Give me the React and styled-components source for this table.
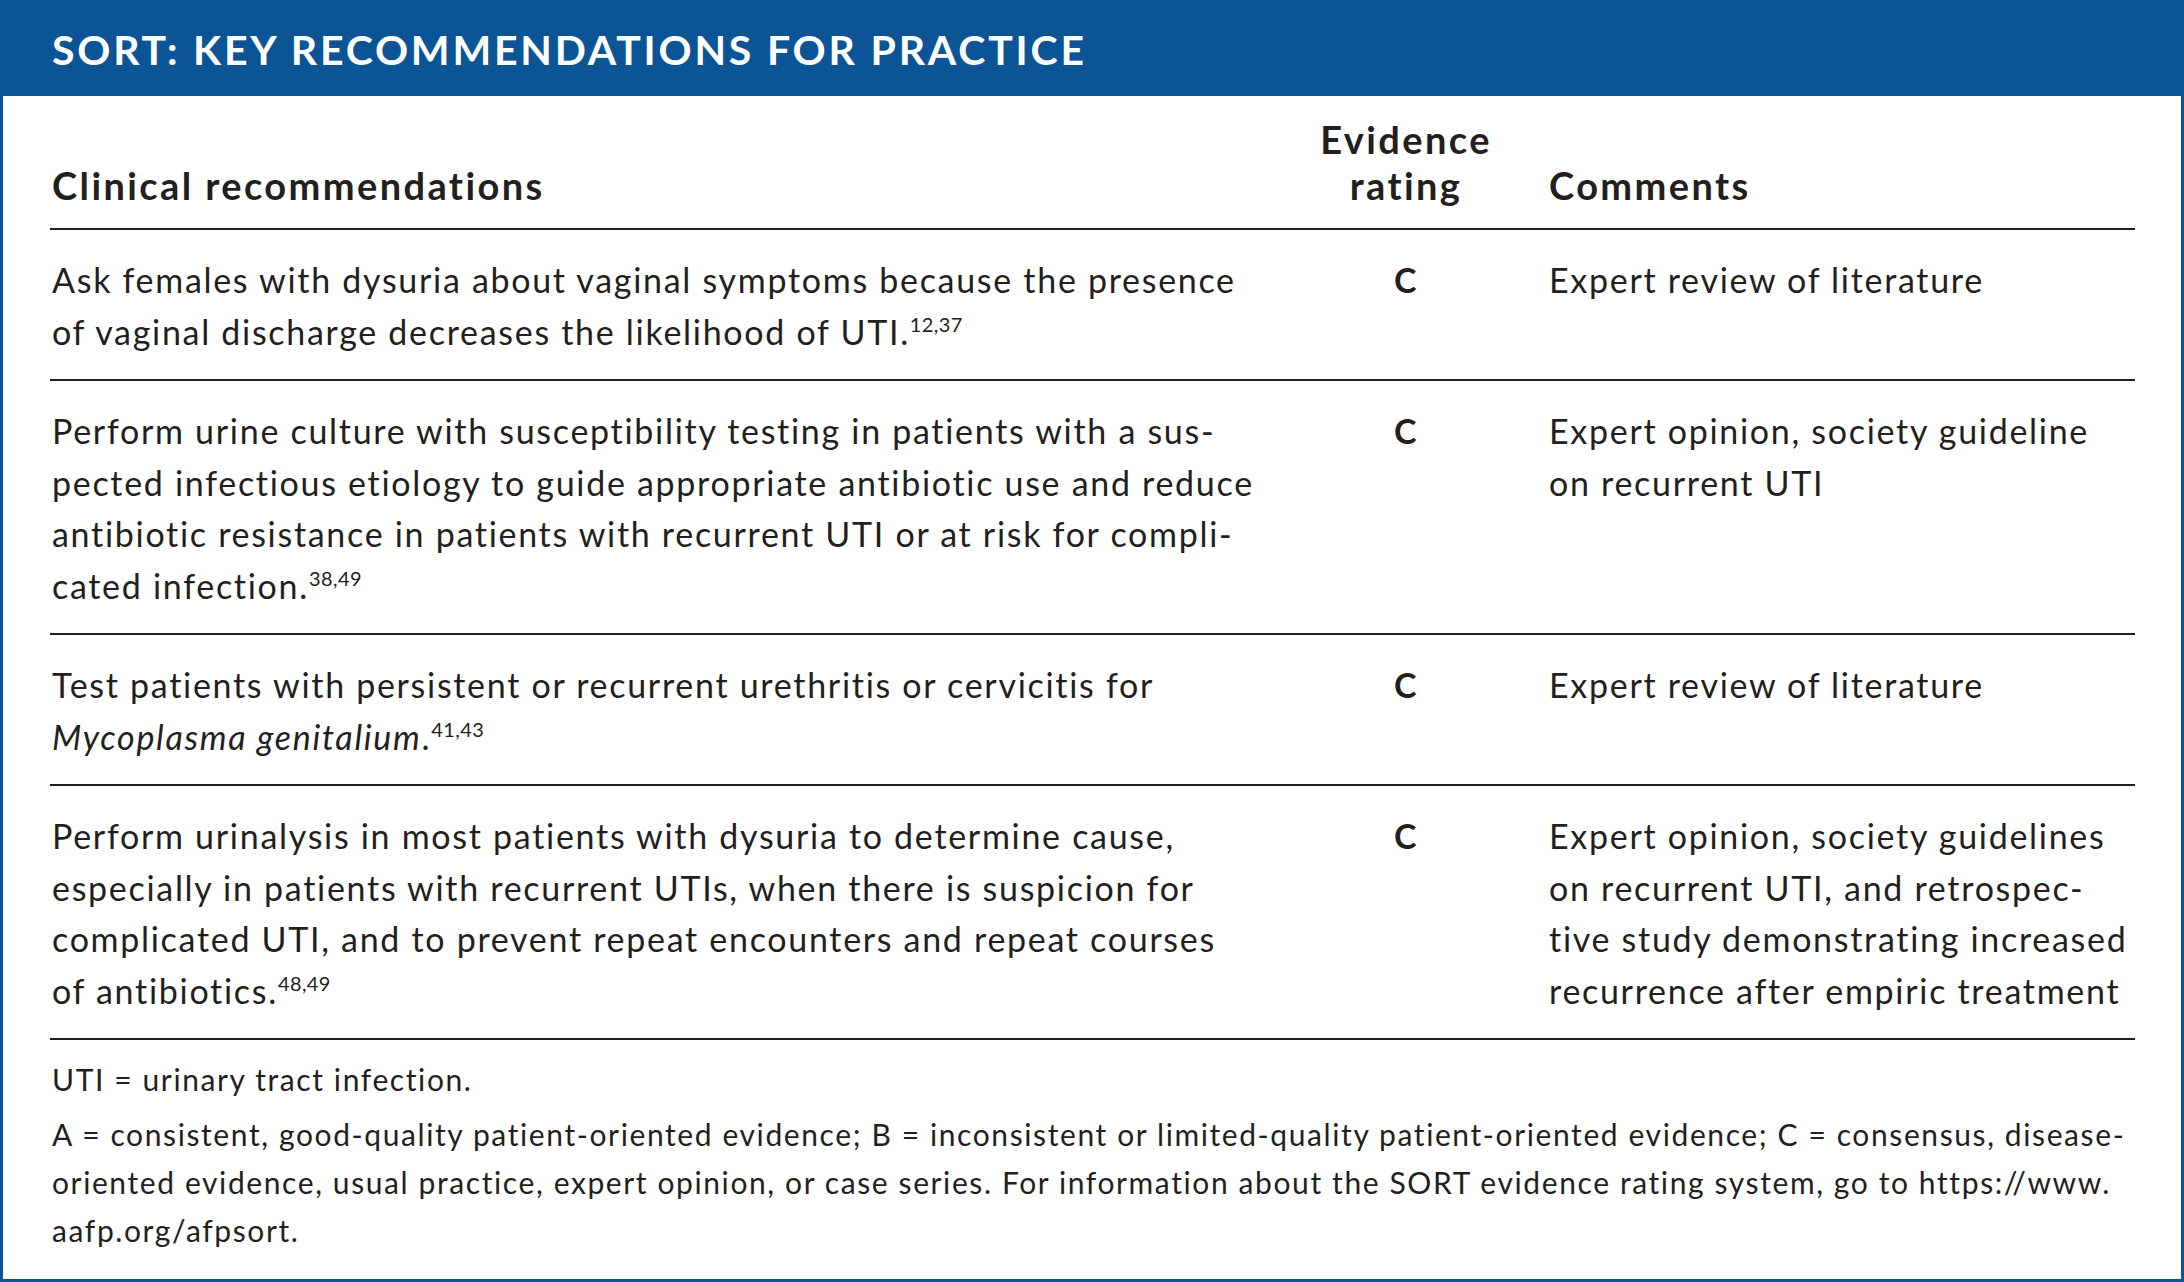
import React from "react";
import styled, { createGlobalStyle } from "styled-components";

const Global = createGlobalStyle`
  html, body { margin: 0; padding: 0; background: #ffffff; }
  body { font-family: Lato, "Open Sans", sans-serif; color: #231f20; }
`;

const Frame = styled.div`
  box-sizing: border-box;
  width: 2184px;
  height: 1282px;
  border: 3px solid #0b5597;
  background: #ffffff;
  display: flex;
  flex-direction: column;
`;

const TitleBar = styled.div`
  height: 93px;
  background: #0b5597;
  display: flex;
  align-items: center;
  padding-left: 49px;
`;

const Title = styled.h1`
  margin: 0;
  font-family: Lato, sans-serif;
  font-weight: 700;
  font-size: 41px;
  letter-spacing: 2.8px;
  color: #ffffff;
`;

const Body = styled.div`
  padding: 0 46px 0 47px;
  display: flex;
  flex-direction: column;
`;

const Row = styled.div`
  display: grid;
  grid-template-columns: 1280px 152px 1fr;
  align-items: ${(p) => (p.$head ? "end" : "start")};
  border-bottom: 2px solid #231f20;
  padding: ${(p) => (p.$head ? "20px 0 20px" : "24px 0 22px")};
`;

const HeadCell = styled.div`
  font-family: Lato, sans-serif;
  font-weight: 700;
  font-size: 38px;
  line-height: 46px;
  letter-spacing: 2.4px;
  padding-left: ${(p) => (p.$pad ? "67px" : "2px")};
`;

const HeadCenter = styled.div`
  display: flex;
  flex-direction: column;
  align-items: center;
  font-family: Lato, sans-serif;
  font-weight: 700;
  font-size: 38px;
  line-height: 46px;
  letter-spacing: 2.4px;
`;

const Cell = styled.div`
  font-family: Lato, sans-serif;
  font-size: 34px;
  line-height: 51.5px;
  letter-spacing: 1.7px;
  font-weight: ${(p) => (p.$bold ? 700 : 400)};
  text-align: ${(p) => (p.$center ? "center" : "left")};
  padding-left: ${(p) => (p.$pad ? "67px" : p.$center ? "0" : "2px")};
`;

const Line = styled.span`
  display: block;
  white-space: nowrap;
`;

const Sup = styled.sup`
  font-size: 20px;
  line-height: 0;
  vertical-align: 13px;
  letter-spacing: 0.4px;
`;

const Notes = styled.div`
  padding: 15px 0 0 2px;
  display: flex;
  flex-direction: column;
  gap: 7px;
`;

const Note = styled.p`
  margin: 0;
  font-family: Lato, sans-serif;
  font-size: 30px;
  line-height: 48px;
  letter-spacing: 1.6px;
`;

const rows = [
  {
    rec: [
      "Ask females with dysuria about vaginal symptoms because the presence",
      <>of vaginal discharge decreases the likelihood of UTI.<Sup>12,37</Sup></>,
    ],
    com: ["Expert review of literature"],
  },
  {
    rec: [
      "Perform urine culture with susceptibility testing in patients with a sus-",
      "pected infectious etiology to guide appropriate antibiotic use and reduce",
      "antibiotic resistance in patients with recurrent UTI or at risk for compli-",
      <>cated infection.<Sup>38,49</Sup></>,
    ],
    com: ["Expert opinion, society guideline", "on recurrent UTI"],
  },
  {
    rec: [
      "Test patients with persistent or recurrent urethritis or cervicitis for",
      <><i>Mycoplasma genitalium</i>.<Sup>41,43</Sup></>,
    ],
    com: ["Expert review of literature"],
  },
  {
    rec: [
      "Perform urinalysis in most patients with dysuria to determine cause,",
      "especially in patients with recurrent UTIs, when there is suspicion for",
      "complicated UTI, and to prevent repeat encounters and repeat courses",
      <>of antibiotics.<Sup>48,49</Sup></>,
    ],
    com: [
      "Expert opinion, society guidelines",
      "on recurrent UTI, and retrospec-",
      "tive study demonstrating increased",
      "recurrence after empiric treatment",
    ],
  },
];

export default function App() {
  return (
    <>
      <Global />
      <Frame>
        <TitleBar>
          <Title>SORT: KEY RECOMMENDATIONS FOR PRACTICE</Title>
        </TitleBar>
        <Body>
          <Row $head>
            <HeadCell>Clinical recommendations</HeadCell>
            <HeadCenter>
              <Line>Evidence</Line>
              <Line>rating</Line>
            </HeadCenter>
            <HeadCell $pad>Comments</HeadCell>
          </Row>
          {rows.map((r, i) => (
            <Row key={i}>
              <Cell>
                {r.rec.map((l, j) => (
                  <Line key={j}>{l}</Line>
                ))}
              </Cell>
              <Cell $center $bold>C</Cell>
              <Cell $pad>
                {r.com.map((l, j) => (
                  <Line key={j}>{l}</Line>
                ))}
              </Cell>
            </Row>
          ))}
          <Notes>
            <Note>UTI = urinary tract infection.</Note>
            <Note>
              <Line>
                A = consistent, good-quality patient-oriented evidence; B = inconsistent or limited-quality patient-oriented evidence; C = consensus, disease-
              </Line>
              <Line>
                oriented evidence, usual practice, expert opinion, or case series. For information about the SORT evidence rating system, go to https://www.
              </Line>
              <Line>aafp.org/afpsort.</Line>
            </Note>
          </Notes>
        </Body>
      </Frame>
    </>
  );
}
